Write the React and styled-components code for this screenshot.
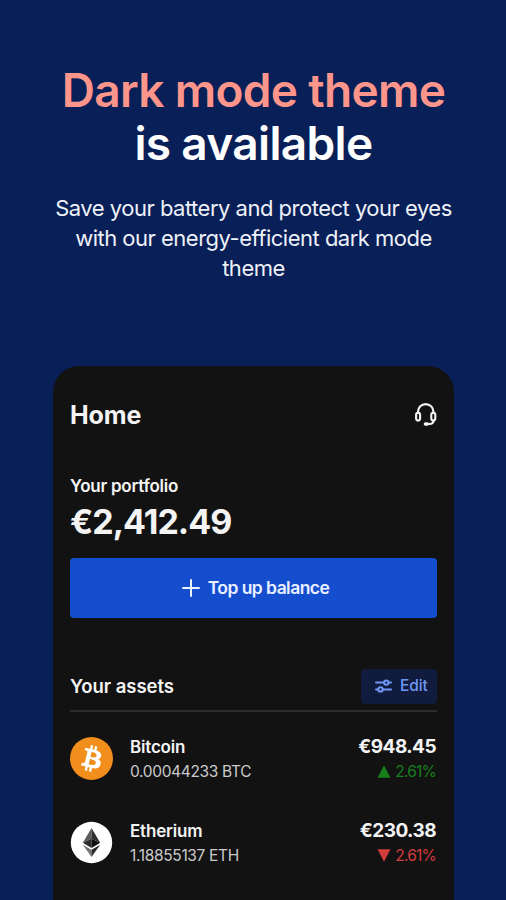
import React from 'react';
import styled, { createGlobalStyle } from 'styled-components';

const Global = createGlobalStyle`
  * { box-sizing: border-box; }
  html, body { margin: 0; padding: 0; background: #081f57; }
  body { font-family: Inter, "Liberation Sans", sans-serif; overflow: hidden; }
  h1, h2, h3, p { margin: 0; }
`;

const Page = styled.main`
  height: 900px;
  padding-left: 1px;
  display: flex;
  flex-direction: column;
  align-items: center;
  background: #081f57;
`;

const Hero = styled.header`
  height: 366px;
  padding-top: 64px;
  text-align: center;
`;

const Title = styled.h1`
  font-size: 46px;
  line-height: 53px;
  font-weight: 600;
  letter-spacing: -0.66px;
`;

const TitleLine = styled.span`
  display: block;
  white-space: nowrap;
  color: ${(p) => p.$color};
`;

const Lead = styled.p`
  width: 420px;
  margin-top: 23px;
  font-size: 22px;
  line-height: 30px;
  letter-spacing: -0.5px;
  color: #eef1f7;
`;

const Phone = styled.section`
  width: 401px;
  flex: 1;
  padding: 0 17px;
  display: flex;
  flex-direction: column;
  background: #121212;
  border-radius: 26px 26px 0 0;
`;

const TopBar = styled.div`
  display: flex;
  align-items: center;
  justify-content: space-between;
  height: 98px;
`;

const Text = styled.span`
  display: block;
  white-space: nowrap;
  font-size: ${(p) => p.$size}px;
  line-height: ${(p) => p.$line}px;
  font-weight: ${(p) => p.$weight || 600};
  letter-spacing: ${(p) => p.$spacing || 0}px;
  color: ${(p) => p.$color || '#f4f4f4'};
`;

const Portfolio = styled.div`
  height: 94px;
  padding-top: 10px;
`;

const TopUp = styled.button`
  display: flex;
  align-items: center;
  justify-content: center;
  gap: 8px;
  flex: none;
  height: 60px;
  padding: 0 0 0 4px;
  border: 0;
  border-radius: 4px;
  background: #154dcf;
  font-family: inherit;
`;

const AssetsHead = styled.div`
  display: flex;
  align-items: center;
  justify-content: space-between;
  margin-top: 51px;
  height: 43px;
  padding-bottom: 7px;
  border-bottom: 2px solid #2b2c2c;
`;

const Edit = styled.button`
  display: flex;
  align-items: center;
  gap: 8px;
  width: 76px;
  height: 35px;
  padding: 0 0 0 14px;
  border: 0;
  border-radius: 4px;
  background: #101b3d;
  font-family: inherit;
`;

const Row = styled.div`
  display: flex;
  align-items: center;
  height: 83.5px;
`;

const AssetList = styled.div`
  padding-top: 5px;
`;

const AssetInfo = styled.div`
  flex: 1;
  padding: 2px 0 0 17px;
`;

const AssetValue = styled.div`
  display: flex;
  flex-direction: column;
  align-items: flex-end;
  padding: 2px 1px 0 0;
`;

const Change = styled.div`
  display: flex;
  align-items: center;
  gap: 4px;
`;

const HeadsetIcon = () => (
  <svg width="23" height="26" viewBox="0 0 23 26" fill="none" stroke="#f4f4f4" strokeWidth="2.1" strokeLinecap="round">
    <path d="M4 11V9.8a7.7 7.7 0 0 1 15.4 0V11" />
    <rect x="2.1" y="10.8" width="4" height="7.8" rx="2" />
    <rect x="17.3" y="10.8" width="4" height="7.8" rx="2" />
    <path d="M19.6 18.8c-.3 2.4-1.8 3.2-4 3.2h-3" />
    <path d="M11.5 22h1.8" strokeWidth="3.6" />
  </svg>
);

const PlusIcon = () => (
  <svg width="18" height="18" viewBox="0 0 18 18" stroke="#eaf0ff" strokeWidth="2" strokeLinecap="round">
    <path d="M9 1v16M1 9h16" />
  </svg>
);

const SlidersIcon = () => (
  <svg width="17" height="14" viewBox="0 0 17 14" fill="none" stroke="#6f97f5" strokeWidth="2" strokeLinecap="round">
    <path d="M1 3.6h8M13.6 3.6H16M1 10.4h2M7.8 10.4H16" />
    <circle cx="11.3" cy="3.6" r="2.2" />
    <circle cx="5.5" cy="10.4" r="2.2" />
  </svg>
);

const BitcoinIcon = () => (
  <svg width="43" height="43" viewBox="0 0 32 32">
    <circle cx="16" cy="16" r="16" fill="#f28f1c" />
    <path
      fill="#fff"
      d="M23.19 14.02c.31-2.1-1.29-3.23-3.48-3.98l.71-2.85-1.73-.43-.69 2.77c-.46-.11-.92-.22-1.39-.33l.7-2.79-1.74-.43-.71 2.84c-.38-.09-.75-.17-1.1-.26v-.01l-2.4-.6-.46 1.86s1.29.29 1.26.31c.7.18.83.64.81 1.01l-.81 3.25c.05.01.11.03.18.06l-.18-.05-1.14 4.54c-.08.21-.3.54-.79.42.02.02-1.26-.32-1.26-.32l-.86 2 2.26.56c.42.11.83.22 1.24.32l-.72 2.88 1.73.43.71-2.85c.48.13.94.25 1.39.36l-.71 2.84 1.74.43.72-2.87c2.96.56 5.19.33 6.13-2.35.75-2.15-.04-3.4-1.6-4.21 1.14-.26 2-1.01 2.22-2.55zm-3.97 5.56c-.54 2.15-4.17.99-5.34.7l.95-3.82c1.18.29 4.95.88 4.39 3.12zm.54-5.59c-.49 1.96-3.51.96-4.49.72l.86-3.46c.98.24 4.14.7 3.63 2.74z"
    />
  </svg>
);

const EthereumIcon = () => (
  <svg width="43" height="43" viewBox="0 0 43 43">
    <circle cx="21.5" cy="21.5" r="20.7" fill="#fff" />
    <path d="M21.5 7 12.8 21.8l8.7-4z" fill="#5c5c5c" />
    <path d="M21.5 7v10.8l8.7 4z" fill="#303030" />
    <path d="m12.8 21.8 8.7 5.1v-9.1z" fill="#2c2c2c" />
    <path d="m30.2 21.8-8.7 5.1v-9.1z" fill="#111" />
    <path d="m12.8 23.7 8.7 12.3v-7.2z" fill="#757575" />
    <path d="m30.2 23.7-8.7 12.3v-7.2z" fill="#2c2c2c" />
  </svg>
);

const Triangle = ({ up }) => (
  <svg width="14" height="13" viewBox="0 0 14 13">
    <path d={up ? 'M7 0.3 13.4 12.7H.6z' : 'M7 12.7 13.4 .3H.6z'} fill={up ? '#17801d' : '#d23c3c'} />
  </svg>
);

const assets = [
  { name: 'Bitcoin', amount: '0.00044233 BTC', value: '€948.45', up: true, Icon: BitcoinIcon },
  { name: 'Etherium', amount: '1.18855137 ETH', value: '€230.38', up: false, Icon: EthereumIcon },
];

export default function App() {
  return (
    <Page>
      <Global />
      <Hero>
        <Title>
          <TitleLine $color="#fe958b">Dark mode theme</TitleLine>
          <TitleLine $color="#fff">is available</TitleLine>
        </Title>
        <Lead>
          Save your battery and protect your eyes
          <br />
          with our energy-efficient dark mode
          <br />
          theme
        </Lead>
      </Hero>
      <Phone>
        <TopBar>
          <Text as="h2" $size={25} $line={30} $weight={650} $spacing={-0.1}>Home</Text>
          <HeadsetIcon />
        </TopBar>
        <Portfolio>
          <Text $size={17} $line={24} $spacing={-0.25}>Your portfolio</Text>
          <Text $size={34} $line={48} $weight={700} $spacing={-1}>€2,412.49</Text>
        </Portfolio>
        <TopUp>
          <PlusIcon />
          <Text $size={17.5} $line={24} $spacing={-0.55} $color="#eaf0ff">Top up balance</Text>
        </TopUp>
        <AssetsHead>
          <Text as="h3" $size={18.5} $line={24} $spacing={-0.05}>Your assets</Text>
          <Edit>
            <SlidersIcon />
            <Text $size={15.5} $line={20} $weight={500} $spacing={-0.1} $color="#6f97f5">Edit</Text>
          </Edit>
        </AssetsHead>
        <AssetList>
          {assets.map(({ name, amount, value, up, Icon }) => (
            <Row key={name}>
              <Icon />
              <AssetInfo>
                <Text $size={17} $line={24} $spacing={-0.2}>{name}</Text>
                <Text $size={15.5} $line={25} $weight={400} $spacing={-0.34} $color="#cacaca">{amount}</Text>
              </AssetInfo>
              <AssetValue>
                <Text $size={19} $line={24} $weight={650} $spacing={-0.55}>{value}</Text>
                <Change>
                  <Triangle up={up} />
                  <Text $size={15.5} $line={25} $weight={400} $spacing={-0.8} $color={up ? '#17801d' : '#d23c3c'}>2.61%</Text>
                </Change>
              </AssetValue>
            </Row>
          ))}
        </AssetList>
      </Phone>
    </Page>
  );
}
